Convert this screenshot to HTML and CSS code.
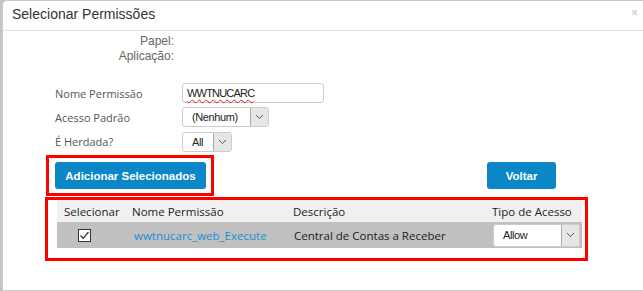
FILE: index.html
```html
<!DOCTYPE html>
<html lang="pt">
<head>
    <meta charset="UTF-8">
    <title>Selecionar Permissões</title>
    <link rel="stylesheet" href="styles.css">
</head>
<body>

    <div class="modal">
        <div class="modal-header">
            <span class="modal-title">Selecionar Permissões</span>
            <span class="close">&times;</span>
        </div>

        <div class="info">
            <div class="info-label">Papel:</div>
            <div class="info-label">Aplicação:</div>
        </div>

        <div class="filters">
            <label class="field-label" for="nome">Nome Permissão</label>
            <div class="text-input" id="nome"><span class="typo">WWTNUCARC</span></div>

            <label class="field-label">Acesso Padrão</label>
            <div class="select select-nenhum">
                <span class="select-value">(Nenhum)</span>
                <span class="select-arrow">
                    <svg width="9" height="6" viewBox="0 0 9 6"><polyline points="1,1 4.5,4.5 8,1" fill="none" stroke="#555" stroke-width="1"/></svg>
                </span>
            </div>

            <label class="field-label">É Herdada?</label>
            <div class="select select-all">
                <span class="select-value">All</span>
                <span class="select-arrow">
                    <svg width="9" height="6" viewBox="0 0 9 6"><polyline points="1,1 4.5,4.5 8,1" fill="none" stroke="#555" stroke-width="1"/></svg>
                </span>
            </div>
        </div>

        <div class="actions">
            <div class="highlight highlight-button">
                <button class="btn btn-add">Adicionar Selecionados</button>
            </div>
            <button class="btn btn-back">Voltar</button>
        </div>

        <div class="highlight highlight-table">
            <table class="grid">
                <colgroup>
                    <col class="w-sel">
                    <col class="w-nome">
                    <col class="w-desc">
                    <col class="w-tipo">
                </colgroup>
                <thead>
                    <tr>
                        <th>Selecionar</th>
                        <th>Nome Permissão</th>
                        <th>Descrição</th>
                        <th>Tipo de Acesso</th>
                    </tr>
                </thead>
                <tbody>
                    <tr>
                        <td class="cell-check">
                            <span class="checkbox">
                                <svg width="11" height="11" viewBox="0 0 11 11"><polyline points="1.5,5.5 4.2,8.3 9.5,2" fill="none" stroke="#333" stroke-width="1.3"/></svg>
                            </span>
                        </td>
                        <td class="cell-link"><a href="#">wwtnucarc_web_Execute</a></td>
                        <td class="cell-desc">Central de Contas a Receber</td>
                        <td class="cell-tipo">
                            <div class="select select-allow">
                                <span class="select-value">Allow</span>
                                <span class="select-arrow">
                                    <svg width="9" height="6" viewBox="0 0 9 6"><polyline points="1,1 4.5,4.5 8,1" fill="none" stroke="#555" stroke-width="1"/></svg>
                                </span>
                            </div>
                        </td>
                    </tr>
                </tbody>
            </table>
        </div>
    </div>

</body>
</html>
```

FILE: styles.css
```css
body {
    margin: 0;
    height: 291px;
    overflow: hidden;
    background: linear-gradient(to right, #c4c4c4, #dadada);
    font-family: "Liberation Sans", Arial, sans-serif;
}

.modal {
    margin-left: 2px;
    height: 291px;
    background-color: #fff;
    border: 1px solid #c8c8c8;
    border-right: none;
    border-radius: 5px 0 0 0;
    box-sizing: border-box;
}

.modal-header {
    display: flex;
    justify-content: space-between;
    align-items: center;
    height: 30px;
    padding: 0 5px 0 9px;
    border-bottom: 1px solid #e2e2e2;
    box-sizing: border-box;
}

.modal-title {
    font-size: 14px;
    color: #333;
    margin-top: -3px;
}

.close {
    font-size: 12px;
    color: #c4c4c4;
    margin-top: -5px;
}

.info {
    width: 171px;
    padding-top: 3px;
    text-align: right;
    font-size: 12px;
    line-height: 15px;
    color: #666;
}

.filters {
    display: grid;
    grid-template-columns: 127px auto;
    row-gap: 4px;
    align-items: center;
    margin-top: 19px;
    padding-left: 52px;
}

.field-label {
    font-family: "Open Sans", sans-serif;
    font-size: 11px;
    color: #555;
}

.text-input {
    width: 142px;
    height: 20px;
    box-sizing: border-box;
    border: 1px solid #ccc;
    border-radius: 3px;
    padding-left: 4px;
    font-size: 11px;
    line-height: 18px;
    color: #222;
    letter-spacing: -0.8px;
}

.typo {
    text-decoration: underline wavy #e02020;
    text-decoration-thickness: 1px;
    text-underline-offset: 2px;
}

.select {
    display: flex;
    height: 20px;
    box-sizing: border-box;
    border: 1px solid #ccc;
    border-radius: 3px;
    background-color: #fff;
    font-family: "Liberation Sans", Arial, sans-serif;
    font-size: 11px;
    letter-spacing: -0.4px;
    color: #222;
    text-align: left;
}

.select-value {
    flex: 1;
    padding-left: 9px;
    line-height: 18px;
}

.select-arrow {
    display: flex;
    align-items: center;
    justify-content: center;
    width: 17px;
    background-color: #e6e6e6;
    border-left: 1px solid #aaa;
    border-radius: 0 2px 2px 0;
}

.select-nenhum {
    width: 87px;
}

.select-all {
    width: 50px;
    margin-top: 1px;
}

.select-allow {
    width: 87px;
    height: 23px;
}

.select-allow .select-value {
    line-height: 21px;
}

.actions {
    display: flex;
    align-items: center;
    margin-top: 3px;
    padding-left: 43px;
}

.highlight {
    border: 3px solid #f00;
}

.highlight-button {
    padding: 4px 5px 4px 6px;
}

.btn {
    display: block;
    height: 27px;
    padding: 0;
    border: none;
    border-radius: 3px;
    background-color: #0b87c8;
    color: #fff;
    font-family: "Liberation Sans", Arial, sans-serif;
    font-size: 11.5px;
    font-weight: bold;
    white-space: nowrap;
    cursor: pointer;
}

.btn-add {
    width: 151px;
}

.btn-back {
    width: 69px;
    margin-left: 273px;
}

.highlight-table {
    width: 543px;
    margin: 1px 0 0 42px;
    padding: 0 3px 10px 9px;
    box-sizing: border-box;
}

.grid {
    width: 525px;
    table-layout: fixed;
    border-collapse: collapse;
    font-family: "Open Sans", sans-serif;
    font-size: 11.5px;
    color: #222;
}

.w-sel {
    width: 68px;
}

.w-nome {
    width: 161px;
}

.w-desc {
    width: 199px;
}

.w-tipo {
    width: 97px;
}

.grid th {
    height: 22px;
    padding: 0 0 0 7px;
    text-align: left;
    font-weight: normal;
    white-space: nowrap;
    background-color: #f0f0f0;
}

.grid td {
    height: 26px;
    padding: 0 0 0 7px;
    white-space: nowrap;
    background-color: #c0c0c0;
}

.grid .cell-check {
    padding-left: 21px;
}

.grid .cell-link {
    padding-left: 9px;
}

.grid .cell-desc {
    padding-left: 8px;
}

.grid .cell-tipo {
    padding-left: 8px;
}

.grid a {
    color: #1a8fd2;
    text-decoration: none;
}

.checkbox {
    display: flex;
    align-items: center;
    justify-content: center;
    width: 13px;
    height: 13px;
    box-sizing: border-box;
    border: 1px solid #333;
    background-color: #fff;
}
```
